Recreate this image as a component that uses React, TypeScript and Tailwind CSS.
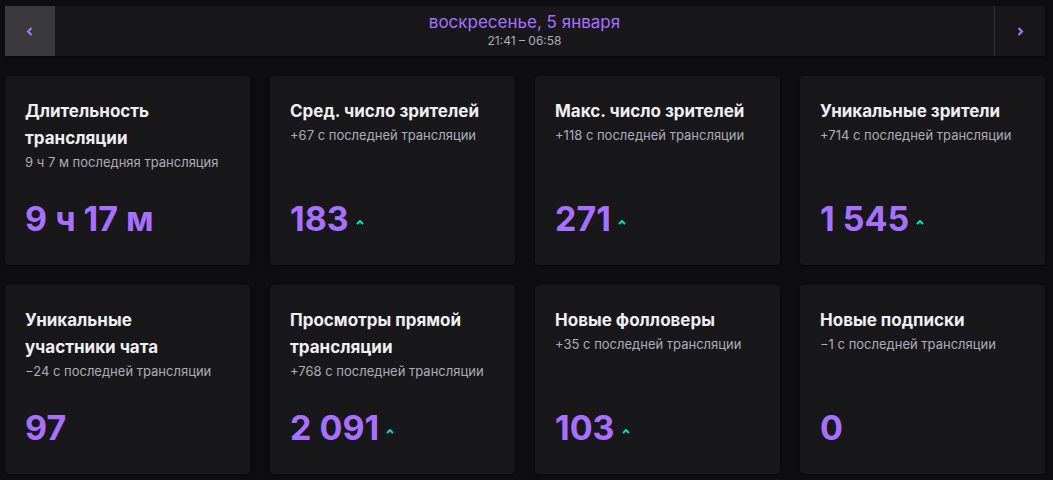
import React from 'react';

// Stat card data
interface Stat {
    title: string;
    delta: string;
    value: string;
    up: boolean;
}

const stats: Stat[] = [
    { title: 'Длительность трансляции', delta: '9 ч 7 м последняя трансляция', value: '9 ч 17 м', up: false },
    { title: 'Сред. число зрителей', delta: '+67 с последней трансляции', value: '183', up: true },
    { title: 'Макс. число зрителей', delta: '+118 с последней трансляции', value: '271', up: true },
    { title: 'Уникальные зрители', delta: '+714 с последней трансляции', value: '1 545', up: true },
    { title: 'Уникальные участники чата', delta: '−24 с последней трансляции', value: '97', up: false },
    { title: 'Просмотры прямой трансляции', delta: '+768 с последней трансляции', value: '2 091', up: true },
    { title: 'Новые фолловеры', delta: '+35 с последней трансляции', value: '103', up: true },
    { title: 'Новые подписки', delta: '−1 с последней трансляции', value: '0', up: false },
];

const Chevron: React.FC<{ dir: 'left' | 'right' }> = ({ dir }) => (
    <svg width="8" height="9" viewBox="0 0 8 9" className="text-[#a970ff]">
        {dir === 'left' ? (
            <path d="M5.5 1 L2 4.5 L5.5 8" fill="none" stroke="currentColor" strokeWidth="2.2" />
        ) : (
            <path d="M2.5 1 L6 4.5 L2.5 8" fill="none" stroke="currentColor" strokeWidth="2.2" />
        )}
    </svg>
);

const UpArrow: React.FC = () => (
    <svg width="8" height="6" viewBox="0 0 8 6" className="text-[#00e6cb] mt-[6px]">
        <path d="M1 5 L4 2 L7 5" fill="none" stroke="currentColor" strokeWidth="1.8" />
    </svg>
);

const StatCard: React.FC<{ stat: Stat }> = ({ stat }) => (
    <div className="h-[189px] bg-[#18181b] rounded-[4px] shadow-[0_1px_3px_rgba(0,0,0,0.5)] px-5 pt-[22px] pb-5 flex flex-col justify-between">
        <div>
            <div className="max-w-[196px] text-[17px] leading-[27px] font-bold text-[#efeff1]">{stat.title}</div>
            <div className="text-[13px] leading-[20px] text-[#adadb8]">{stat.delta}</div>
        </div>
        <div className="flex items-center gap-[7px] pb-[5px]">
            <span className="text-[34px] leading-[42px] font-bold text-[#a970ff]">{stat.value}</span>
            {stat.up && <UpArrow />}
        </div>
    </div>
);

export default function App() {
    return (
        <div className="min-h-[480px] bg-[#0e0e10] pl-[5px] pr-[8px] pt-[6px]" style={{ fontFamily: 'Inter, "Noto Sans", sans-serif' }}>
            {/* Date selector */}
            <div className="h-[50px] bg-[#18181b] flex items-stretch shadow-[0_1px_2px_rgba(0,0,0,0.6)]">
                <button className="w-[50px] bg-[#3a3a3d] flex items-center justify-center">
                    <Chevron dir="left" />
                </button>
                <div className="flex-1 flex flex-col items-center justify-center">
                    <div className="text-[17px] leading-[22px] text-[#a970ff] -mt-[3px]">воскресенье, 5 января</div>
                    <div className="text-[12px] leading-[16px] text-[#adadb8]">21:41 – 06:58</div>
                </div>
                <button className="w-[51px] border-l border-[#2f2f35] flex items-center justify-center">
                    <Chevron dir="right" />
                </button>
            </div>

            {/* Stats grid */}
            <div className="grid grid-cols-4 gap-5 mt-5">
                {stats.map((s) => (
                    <StatCard key={s.title} stat={s} />
                ))}
            </div>
        </div>
    );
}
